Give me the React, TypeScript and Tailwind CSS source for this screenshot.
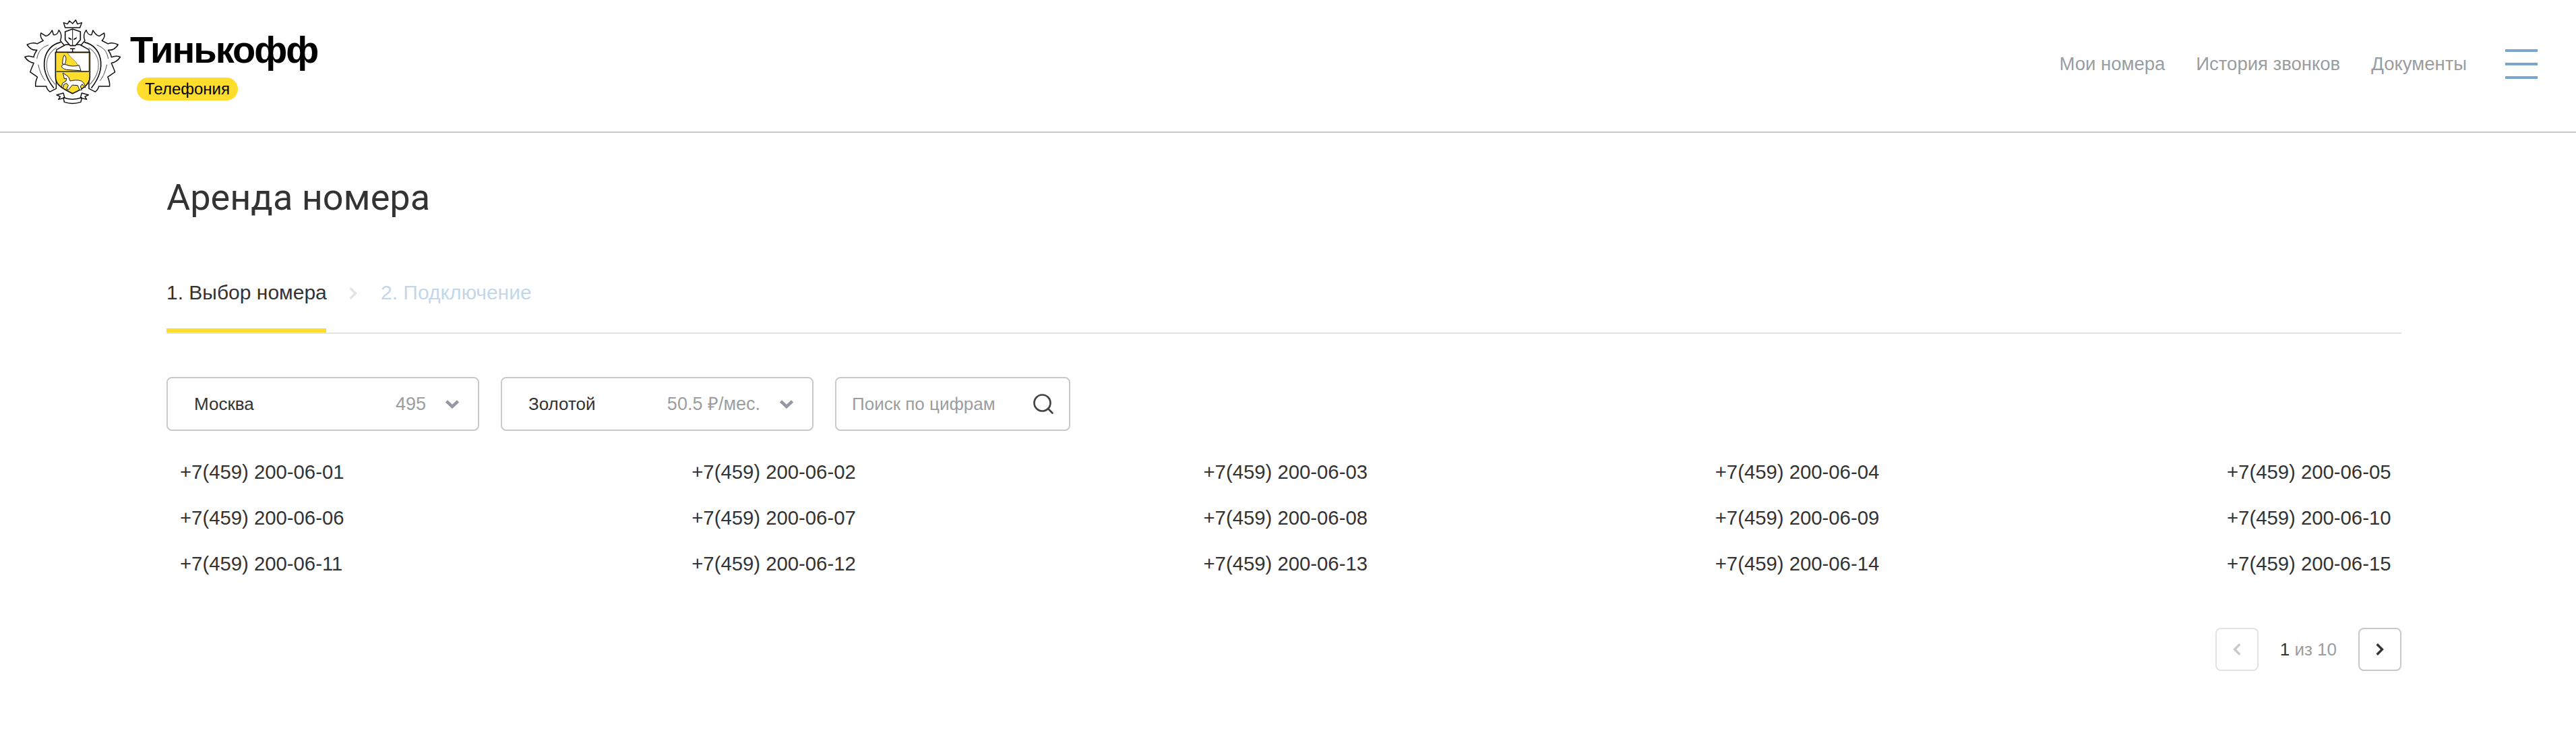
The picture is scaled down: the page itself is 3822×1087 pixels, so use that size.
import { Search } from "lucide-react";

const NUMBERS = [
  ["01", "02", "03", "04", "05"],
  ["06", "07", "08", "09", "10"],
  ["11", "12", "13", "14", "15"],
];

const Leaf = () => (
  <g stroke="#111" strokeLinejoin="round" strokeLinecap="round">
    <path
      fill="#fff"
      strokeWidth="4.5"
      d="M288 205 L268 182 C276 165 272 148 262 135 C258 150 248 158 238 156 L232 136 C224 150 216 160 204 162 L182 148 C178 160 182 172 192 182 L165 196 C150 190 136 192 120 200 C130 216 146 226 164 224 C156 236 150 246 150 256 C136 250 122 250 110 255 C120 270 134 280 150 282 C144 296 138 308 134 322 L166 344 C160 358 156 372 158 386 L206 386 C208 396 214 404 222 410 L250 396 L250 236 Z"
    />
    <path fill="none" strokeWidth="5" d="M268 190 C196 206 166 300 238 392" />
    <path fill="none" stroke="#777" strokeWidth="3.5" d="M250 214 C196 248 192 320 244 376" />
    <path fill="none" stroke="#444" strokeWidth="3" d="M214 202 C180 214 168 236 164 262 M170 290 C176 316 184 340 200 360" />
  </g>
);

const Logo = () => (
  <svg viewBox="105 85 435 385" className="w-[145px] h-[128px] shrink-0 self-start mt-[28px]">
    <Leaf />
    <g transform="translate(646,0) scale(-1,1)">
      <Leaf />
    </g>
    {/* crown */}
    <path
      fill="#fff"
      stroke="#111"
      strokeWidth="4.5"
      strokeLinejoin="round"
      d="M290 124 L283 102 L300 108 L309 94 L323 106 L337 90 L345 108 L364 102 L356 124 Z"
    />
    {/* knight */}
    <path
      fill="#fff"
      stroke="#111"
      strokeWidth="4.5"
      strokeLinejoin="round"
      d="M250 234 L252 222 L292 200 L356 200 L396 222 L398 234 Z"
    />
    <path
      fill="#fff"
      stroke="#111"
      strokeWidth="5"
      strokeLinejoin="round"
      d="M290 142 L323 130 L358 142 L358 178 L336 204 L312 204 L290 178 Z"
    />
    <path d="M323 132 V204" stroke="#111" strokeWidth="3" />
    <path d="M304 166 L318 174 L318 180 L306 174 Z M342 166 L328 174 L328 180 L340 174 Z" fill="#111" />
    <path d="M312 218 H334 M323 218 V238" stroke="#111" strokeWidth="4.5" />
    {/* shield */}
    <path
      fill="#ffdd2d"
      stroke="#111"
      strokeWidth="5"
      d="M247 234 H400 V345 C400 382 360 400 323 418 C286 400 247 382 247 345 Z"
    />
    <path
      fill="#fff"
      stroke="#222"
      strokeWidth="1.5"
      d="M300 237 L396 237 V318 L360 318 L352 298 L336 276 L322 262 L312 252 Z"
    />
    <path d="M251 320 H396" stroke="#111" strokeWidth="3.5" />
    {/* sword and arm */}
    <path
      fill="#fff"
      stroke="#111"
      strokeWidth="3"
      strokeLinejoin="round"
      d="M286 246 C296 254 296 270 288 288 L278 286 C278 270 280 256 286 246 Z"
    />
    <path
      fill="#fff"
      stroke="#111"
      strokeWidth="3"
      strokeLinejoin="round"
      d="M274 296 C276 288 288 286 296 290 C316 298 336 296 352 292 L360 316 L300 312 C288 310 276 306 274 296 Z"
    />
    {/* unicorn */}
    <path
      fill="#fff"
      stroke="#111"
      strokeWidth="3"
      strokeLinejoin="round"
      d="M280 326 L300 340 C308 344 308 354 312 362 C328 358 348 356 362 362 C372 368 378 378 380 392 L372 384 L366 376 L358 386 L364 402 L354 402 L346 382 L322 380 L312 392 L304 402 L296 398 L304 382 L296 372 L284 378 L280 394 L274 388 L278 372 L294 362 L296 350 L286 352 L284 342 Z"
    />
    {/* ribbon */}
    <path
      fill="#fff"
      stroke="#111"
      strokeWidth="4.5"
      strokeLinejoin="round"
      d="M252 424 L282 416 L288 438 L260 444 L268 432 Z M394 424 L364 416 L358 438 L386 444 L378 432 Z"
    />
    <path
      fill="#fff"
      stroke="#111"
      strokeWidth="4.5"
      strokeLinejoin="round"
      d="M282 436 C310 446 336 446 364 436 L360 456 C336 464 310 464 286 456 Z"
    />
  </svg>
);

const Chevron = ({ className }: { className: string }) => (
  <svg viewBox="0 0 20 13" className={className} fill="none" stroke="currentColor" strokeWidth="4.5">
    <path d="M1.5 2 L10 10 L18.5 2" />
  </svg>
);

const Arrow = ({ flip, className }: { flip?: boolean; className: string }) => (
  <svg viewBox="0 0 14 22" className={className} fill="none" stroke="currentColor" strokeWidth="4">
    <path d={flip ? "M12 2 L3 11 L12 20" : "M2 2 L11 11 L2 20"} />
  </svg>
);

const SelectBox = ({ label, hint }: { label: string; hint: string }) => (
  <div className="w-[464px] h-[80px] border-2 border-[#c7c9cc] rounded-lg flex items-center pl-[39px] pr-[28px] text-[26px]">
    <span className="text-[#333333]">{label}</span>
    <span className="ml-auto text-[27px] text-[#9b9ea1]">{hint}</span>
    <Chevron className="w-[20px] h-[13px] ml-[29px] text-[#9299a2]" />
  </div>
);

export default function App() {
  return (
    <div className="min-h-screen bg-white font-['Liberation_Sans',sans-serif]">
      <header className="h-[197px] border-b-2 border-[#c7c9cc] flex items-center pl-[35px] pr-[57px]">
        <Logo />
        <div className="ml-[13px] self-start mt-[41px]">
          <div className="text-[56px] leading-[66px] font-bold tracking-[-2px] text-black">Тинькофф</div>
          <div className="ml-[10px] mt-[8px] w-[150px] h-[34px] rounded-[17px] bg-[#ffdd2d] flex items-center justify-center text-[24px] text-black">
            Телефония
          </div>
        </div>
        <nav className="ml-auto -mt-[5px] flex items-center text-[27.5px] text-[#9a9da0]">
          <a>Мои номера</a>
          <a className="ml-[46px]">История звонков</a>
          <a className="ml-[46px]">Документы</a>
        </nav>
        <div className="ml-[57px] -mt-[5px] w-[48px] flex flex-col gap-[16px]">
          <div className="h-[4px] bg-[#7aa5cc]" />
          <div className="h-[4px] bg-[#7aa5cc]" />
          <div className="h-[4px] bg-[#7aa5cc]" />
        </div>
      </header>

      <main className="w-[3316px] ml-[247px]">
        <h1 className="mt-[64px] text-[54px] leading-[64px] text-[#333333] font-['Roboto',sans-serif]">Аренда номера</h1>

        <div className="mt-[89px] border-b-2 border-[#e3e3e3] flex items-start text-[30px] leading-[40px]">
          <div className="w-[237px] h-[79px] border-b-[6px] border-[#ffdd2d] text-[#333333] whitespace-nowrap">
            1. Выбор номера
          </div>
          <Arrow className="w-[12px] h-[20px] mt-[11px] ml-[34px] text-[#e3e3e3]" />
          <div className="ml-[35px] text-[#c3d7ea] whitespace-nowrap">2. Подключение</div>
        </div>

        <div className="mt-[64px] flex gap-[32px]">
          <SelectBox label="Москва" hint="495" />
          <SelectBox label="Золотой" hint="50.5 ₽/мес." />
          <div className="w-[349px] h-[80px] border-2 border-[#c7c9cc] rounded-lg flex items-center pl-[23px] pr-[20px] text-[26px] text-[#9b9ea1] whitespace-nowrap">
            Поиск по цифрам
            <Search className="ml-auto w-[36px] h-[36px] text-[#444444]" strokeWidth={1.8} />
          </div>
        </div>

        <div className="mt-[27px] flex flex-col text-[29.3px] leading-[68px] text-[#333333]">
          {NUMBERS.map((row) => (
            <div key={row[0]} className="flex justify-between">
              {row.map((n) => (
                <div key={n} className="w-[279px] pl-[20px] whitespace-nowrap">
                  +7(459) 200-06-{n}
                </div>
              ))}
            </div>
          ))}
        </div>

        <div className="mt-[61px] flex items-center justify-end">
          <button className="w-[64px] h-[64px] border-2 border-[#e3e3e3] rounded-lg flex items-center justify-center">
            <Arrow flip className="w-[12px] h-[20px] text-[#c7c9cc]" />
          </button>
          <div className="ml-[32px] mr-[32px] text-[26px] text-[#9b9ea1]">
            <span className="text-[#333333]">1</span> из 10
          </div>
          <button className="w-[64px] h-[64px] border-2 border-[#c7c9cc] rounded-lg flex items-center justify-center">
            <Arrow className="w-[12px] h-[20px] text-[#333333]" />
          </button>
        </div>
      </main>
    </div>
  );
}
